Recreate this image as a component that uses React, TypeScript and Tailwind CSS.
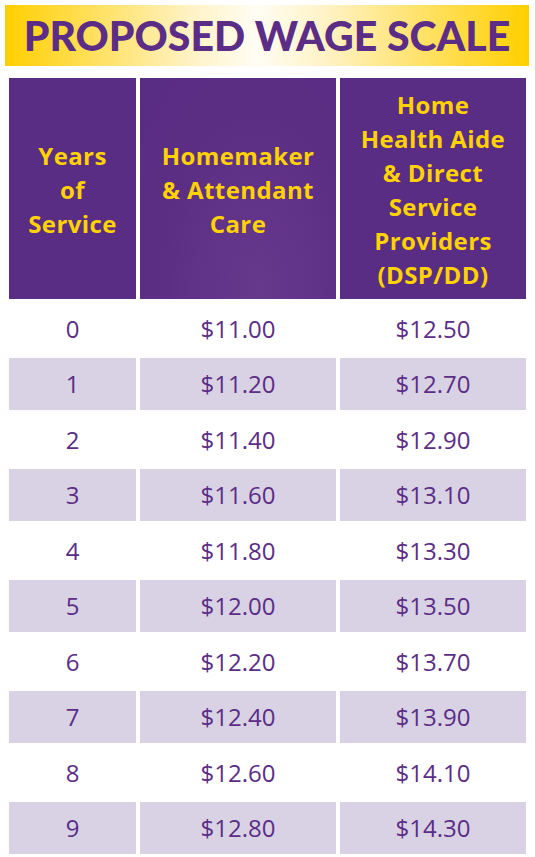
const ROWS: [string, string, string][] = [
  ['0', '$11.00', '$12.50'],
  ['1', '$11.20', '$12.70'],
  ['2', '$11.40', '$12.90'],
  ['3', '$11.60', '$13.10'],
  ['4', '$11.80', '$13.30'],
  ['5', '$12.00', '$13.50'],
  ['6', '$12.20', '$13.70'],
  ['7', '$12.40', '$13.90'],
  ['8', '$12.60', '$14.10'],
  ['9', '$12.80', '$14.30'],
]

const COLS = 'grid grid-cols-[127px_196px_186px] gap-x-[4px]'

function HeaderCell({ children, glow = false }: { children: React.ReactNode; glow?: boolean }) {
  return (
    <div
      className={`flex items-center justify-center pt-[2px] text-center font-['Open_Sans',sans-serif] text-[24px] font-bold leading-[34px] tracking-[0.4px] text-[#ffd200] ${
        glow
          ? 'bg-[radial-gradient(ellipse_at_60%_95%,#67398d_0%,#5c2f85_55%,#582c82_100%)]'
          : 'bg-[#592d83]'
      }`}
    >
      <div>{children}</div>
    </div>
  )
}

export default function App() {
  return (
    <div className="min-h-[857px] w-[535px] bg-white pt-[5px] font-['Open_Sans',sans-serif]">
      <div className="ml-[5px] mr-[6px] flex h-[61px] items-center justify-center bg-[linear-gradient(to_right,#ffcf00_0%,#fff2c2_35%,#fffdf4_48%,#fff2c2_62%,#ffcf00_100%)]">
        <h1 className="font-['Lato',sans-serif] text-[41px] font-black text-[#5b2d86]">PROPOSED WAGE SCALE</h1>
      </div>

      <div className="ml-[9px] mt-[12px]">
        <div className={`${COLS} h-[221px]`}>
          <HeaderCell>
            Years
            <br />
            of
            <br />
            Service
          </HeaderCell>
          <HeaderCell glow>
            Homemaker
            <br />& Attendant
            <br />
            Care
          </HeaderCell>
          <HeaderCell>
            Home
            <br />
            Health Aide
            <br />& Direct
            <br />
            Service
            <br />
            Providers
            <br />
            (DSP/DD)
          </HeaderCell>
        </div>

        <div className="mt-[3.5px] flex flex-col gap-y-[3.5px]">
          {ROWS.map((r, i) => (
            <div key={r[0]} className={`${COLS} h-[52px]`}>
              {r.map((v, j) => (
                <div
                  key={j}
                  className={`flex items-center justify-center text-[24px] text-[#5b2d86] ${
                    i % 2 === 1 ? 'bg-[#d9d2e5]' : 'bg-white'
                  }`}
                >
                  {v}
                </div>
              ))}
            </div>
          ))}
        </div>
      </div>
    </div>
  )
}
